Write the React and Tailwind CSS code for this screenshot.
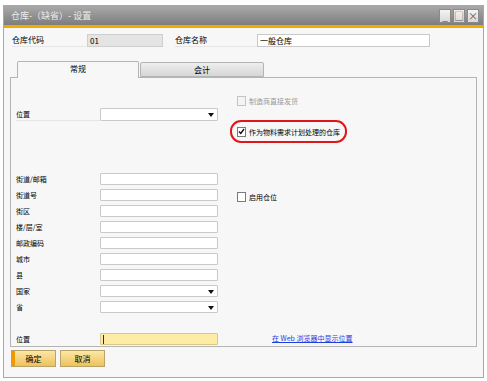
import React from 'react'

const font = { fontFamily: '"Noto Sans CJK SC", "Noto Sans", sans-serif' }

const Arrow = () => (
  <svg width="6" height="4" viewBox="0 0 6 4" className="absolute right-[3px] top-[4px]">
    <path d="M0 0 L6 0 L3 4 Z" fill="#111" />
  </svg>
)

const Box = ({ checked, disabled }) => (
  <div
    className={`w-[9px] h-[10px] border flex items-center justify-center shrink-0 ${
      disabled ? 'border-[#c4c4c4] bg-[#f4f4f4]' : 'border-[#7a7a7a] bg-white'
    }`}
  >
    {checked && (
      <svg width="7" height="7" viewBox="0 0 7 7">
        <path d="M1 3.5 L2.8 5.5 L6 1" stroke="#111" strokeWidth="1.4" fill="none" />
      </svg>
    )}
  </div>
)

const Field = ({ label, select, yellow }) => (
  <div className="flex h-[16px] items-start">
    <div className="w-[84px] h-[12px] text-[7px] leading-[12px] text-black whitespace-nowrap">{label}</div>
    <div
      className={`relative w-[118px] h-[12px] border rounded-[1px] ${
        yellow ? 'bg-[#fdeca6] border-[#d8c98a]' : 'bg-white border-[#c9c9c9]'
      }`}
    >
      {select && <Arrow />}
      {yellow && <div className="absolute left-[2px] top-[1px] w-px h-[9px] bg-[#1a2a7a]" />}
    </div>
  </div>
)

const address = [
  ['街道/邮箱'],
  ['街道号'],
  ['街区'],
  ['楼/层/室'],
  ['邮政编码'],
  ['城市'],
  ['县'],
  ['国家', true],
  ['省', true],
]

export default function App() {
  return (
    <div className="w-[487px] h-[381px] bg-white overflow-hidden pt-[5px] pl-[3px]" style={font}>
      <div className="w-[481px] h-[373px] border border-[#a8a8a8] bg-[#f7f7f7] flex flex-col">
        {/* Title bar */}
        <div className="h-[19px] bg-gradient-to-b from-[#a9a9a9] to-[#7d7d7d] flex items-center justify-between pl-[7px] pr-[4px]">
          <span className="text-[9px] text-[#ececec] whitespace-nowrap">仓库-（缺省）- 设置</span>
          <div className="flex gap-[2px] mt-[1px]">
            {['_', '□', '×'].map((g, i) => (
              <div
                key={i}
                className="w-[12px] h-[14px] bg-gradient-to-b from-[#f4f4f4] to-[#d8d8d8] border border-[#8a8a8a] text-[10px] leading-[12px] text-center text-[#555]"
              >
                {g}
              </div>
            ))}
          </div>
        </div>
        <div className="h-[3px] bg-[#f2aa00]" />

        {/* Header row */}
        <div className="flex items-center h-[13px] mt-[6px] pl-[8px]">
          <div className="w-[75px] text-[8px] text-black border-b border-[#e6e6e6] leading-[12px]">仓库代码</div>
          <div className="w-[76px] h-[13px] bg-[#e4e4e4] border border-[#cfcfcf] text-[8px] leading-[11px] pl-[2px]">01</div>
          <div className="w-[82px] ml-[12px] text-[8px] text-black border-b border-[#e6e6e6] leading-[12px]">仓库名称</div>
          <div className="w-[173px] h-[13px] bg-white border border-[#c9c9c9] text-[8px] leading-[11px] pl-[2px]">一般仓库</div>
        </div>

        {/* Tabs */}
        <div className="flex items-end mt-[13px] pl-[13px] h-[17px]">
          <div className="w-[122px] h-[17px] bg-[#f7f7f7] border border-b-0 border-[#b4b4b4] rounded-t-[2px] text-[8px] text-center leading-[14px] text-black relative top-[1px] z-10">
            常规
          </div>
          <div className="w-[124px] h-[15px] bg-gradient-to-b from-[#eeeeee] to-[#d6d6d6] border border-[#b4b4b4] rounded-t-[2px] text-[8px] text-center leading-[13px] text-black ml-[1px]">
            会计
          </div>
        </div>

        {/* Panel */}
        <div className="ml-[6px] w-[467px] h-[270px] border border-[#b4b4b4] bg-[#f7f7f7] flex flex-col pl-[5px]">
          <div className="flex">
            <div className="flex flex-col w-[214px]">
              <div className="mt-[30px] flex h-[13px] items-start">
                <div className="w-[84px] text-[7px] leading-[12px] text-black border-b border-[#e6e6e6]">位置</div>
                <div className="relative w-[118px] h-[13px] bg-white border border-[#c9c9c9] rounded-[1px]">
                  <Arrow />
                </div>
              </div>
              <div className="mt-[52px] flex flex-col">
                {address.map(([l, s]) => (
                  <Field key={l} label={l} select={s} />
                ))}
              </div>
            </div>
            <div className="flex flex-col">
              <div className="mt-[18px] ml-[7px] flex items-center gap-[3px] h-[10px]">
                <Box disabled />
                <span className="text-[7px] text-[#9a9a9a] leading-[10px] whitespace-nowrap">制造商直接发货</span>
              </div>
              <div className="mt-[14px] w-[117px] h-[23px] border-2 border-[#e0161a] rounded-[11px] flex items-center gap-[3px] pl-[5px]">
                <Box checked />
                <span className="text-[7px] text-black leading-[10px] whitespace-nowrap">作为物料需求计划处理的仓库</span>
              </div>
              <div className="mt-[49px] ml-[7px] flex items-center gap-[3px] h-[10px]">
                <Box />
                <span className="text-[7px] text-black leading-[10px] whitespace-nowrap">启用仓位</span>
              </div>
            </div>
          </div>

          <div className="mt-[16px] flex items-start">
            <Field label="位置" yellow />
            <a className="ml-[54px] mt-[-1px] text-[7px] leading-[12px] text-[#1f3ee0] underline whitespace-nowrap">在 Web 浏览器中显示位置</a>
          </div>
        </div>

        {/* Buttons */}
        <div className="flex gap-[4px] mt-[3px] ml-[7px]">
          <div className="relative w-[45px] h-[17px] bg-gradient-to-b from-[#fbe7a4] to-[#eec25a] border border-[#b8a36a] text-[8px] leading-[15px] text-center text-black overflow-hidden">
            <div className="absolute left-0 top-0 w-[3px] h-full bg-[#f09a00]" />
            确定
          </div>
          <div className="w-[45px] h-[17px] bg-gradient-to-b from-[#fbe7a4] to-[#eec25a] border border-[#b8a36a] text-[8px] leading-[15px] text-center text-black">
            取消
          </div>
        </div>
      </div>
    </div>
  )
}
